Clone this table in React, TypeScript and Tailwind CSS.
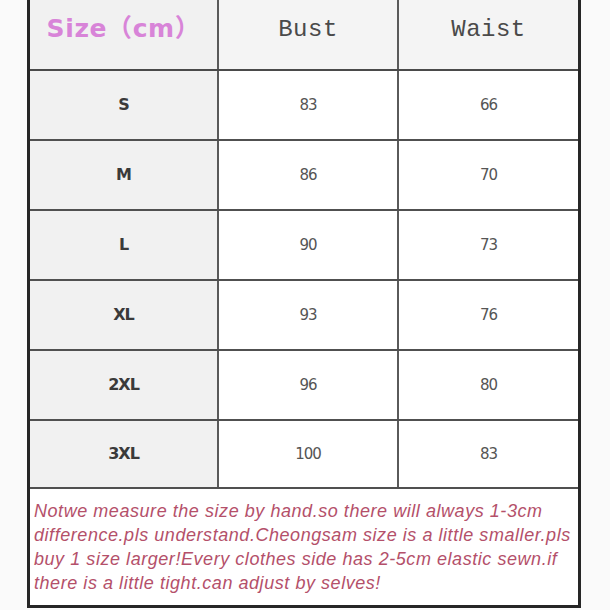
const rows = [
  { size: "S", bust: "83", waist: "66" },
  { size: "M", bust: "86", waist: "70" },
  { size: "L", bust: "90", waist: "73" },
  { size: "XL", bust: "93", waist: "76" },
  { size: "2XL", bust: "96", waist: "80" },
  { size: "3XL", bust: "100", waist: "83" },
];

const noteLines = [
  "Notwe measure the size by hand.so there will always 1-3cm",
  "difference.pls understand.Cheongsam size is a little smaller.pls",
  "buy 1 size larger!Every clothes side has 2-5cm elastic sewn.if",
  "there is a little tight.can adjust by selves!",
];

export default function App() {
  return (
    <div className="w-[610px] h-[610px] bg-[#fafafa] overflow-hidden">
      <div className="ml-[27px] w-[554px] border-x-[3px] border-b-[3px] border-[#262626] bg-white">
        <div className="grid grid-cols-[189px_180px_179px] h-[71px] border-b-2 border-[#4a4a4a]">
          <div className="flex items-center justify-center pb-[12px] bg-[#f1f1f1] border-r-2 border-[#5a5a5a] font-['DejaVu_Sans','Noto_Sans_CJK_SC',sans-serif] font-bold text-[25px] text-[#d884d8] tracking-[0.6px]">
            Size（cm）
          </div>
          <div className="flex items-center justify-center pb-[10px] bg-[#f4f4f4] border-r-2 border-[#5a5a5a] font-['Liberation_Mono',monospace] text-[24px] text-[#4a4a4a] tracking-[0.5px]">
            Bust
          </div>
          <div className="flex items-center justify-center pb-[10px] bg-[#f4f4f4] font-['Liberation_Mono',monospace] text-[24px] text-[#4a4a4a] tracking-[0.5px]">
            Waist
          </div>
        </div>
        {rows.map((r, i) => (
          <div
            key={r.size}
            className={
              i < rows.length - 1
                ? "grid grid-cols-[189px_180px_179px] h-[70px] border-b-2 border-[#505050]"
                : "grid grid-cols-[189px_180px_179px] h-[68px] border-b-2 border-[#505050]"
            }
          >
            <div className="flex items-center justify-center bg-[#f1f1f1] border-r-2 border-[#5a5a5a] font-['DejaVu_Sans',sans-serif] font-bold text-[16px] text-[#3a3a3a] tracking-[-1px]">
              {r.size}
            </div>
            <div className="flex items-center justify-center bg-white border-r-2 border-[#5a5a5a] font-['DejaVu_Sans',sans-serif] text-[15px] text-[#555] tracking-[-1px]">
              {r.bust}
            </div>
            <div className="flex items-center justify-center bg-white font-['DejaVu_Sans',sans-serif] text-[15px] text-[#555] tracking-[-1px]">
              {r.waist}
            </div>
          </div>
        ))}
        <div className="h-[116px] pl-[4px] pt-[10px] bg-white font-['Liberation_Sans',sans-serif] italic text-[18px] leading-[24px] text-[#b4506a] tracking-[0.55px] whitespace-nowrap">
          {noteLines.map((line) => (
            <div key={line}>{line}</div>
          ))}
        </div>
      </div>
    </div>
  );
}
